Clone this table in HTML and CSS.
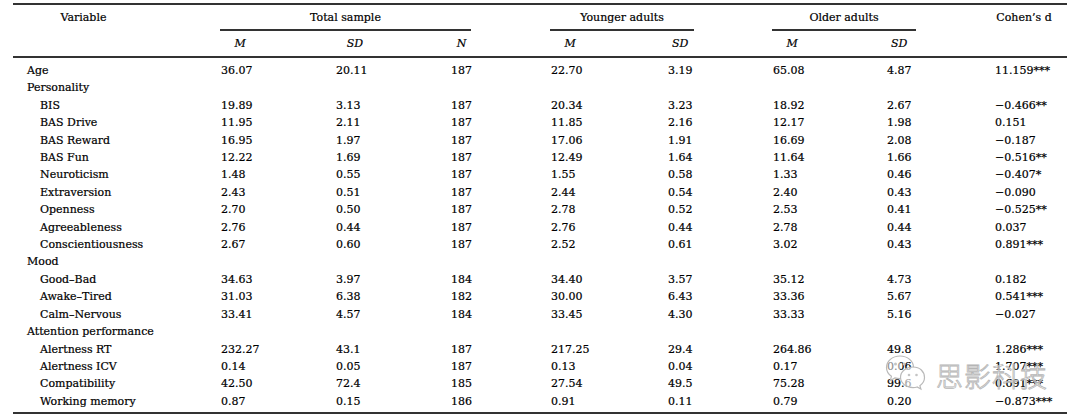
FILE: index.html
```html
<!DOCTYPE html>
<html lang="en">
<head>
<meta charset="utf-8">
<title>Descriptive statistics</title>
<link rel="stylesheet" href="styles.css">
</head>
<body>
<div class="page">
  <div class="tbl">
    <div class="h1 c0"><span class="lab w-var">Variable</span></div>
    <div class="h1 grp span3"><div class="gline w-total">Total sample</div></div>
    <div class="h1 grp span2"><div class="gline w-young">Younger adults</div></div>
    <div class="h1 grp span2"><div class="gline w-old">Older adults</div></div>
    <div class="h1"><span class="lab w-d">Cohen’s d</span></div>

    <div class="h2"></div>
    <div class="h2"><span class="lab it w-m">M</span></div>
    <div class="h2"><span class="lab it w-sd2">SD</span></div>
    <div class="h2"><span class="lab it w-n">N</span></div>
    <div class="h2"><span class="lab it w-m">M</span></div>
    <div class="h2"><span class="lab it w-sd">SD</span></div>
    <div class="h2"><span class="lab it w-m">M</span></div>
    <div class="h2"><span class="lab it w-sd">SD</span></div>
    <div class="h2"></div>

    <div class="rule"></div>

    <div class="c c0 top">Age</div><div class="c">36.07</div><div class="c">20.11</div><div class="c">187</div><div class="c">22.70</div><div class="c">3.19</div><div class="c">65.08</div><div class="c">4.87</div><div class="c">11.159***</div>
    <div class="c full top">Personality</div>
    <div class="c c0 sub">BIS</div><div class="c">19.89</div><div class="c">3.13</div><div class="c">187</div><div class="c">20.34</div><div class="c">3.23</div><div class="c">18.92</div><div class="c">2.67</div><div class="c">−0.466**</div>
    <div class="c c0 sub">BAS Drive</div><div class="c">11.95</div><div class="c">2.11</div><div class="c">187</div><div class="c">11.85</div><div class="c">2.16</div><div class="c">12.17</div><div class="c">1.98</div><div class="c">0.151</div>
    <div class="c c0 sub">BAS Reward</div><div class="c">16.95</div><div class="c">1.97</div><div class="c">187</div><div class="c">17.06</div><div class="c">1.91</div><div class="c">16.69</div><div class="c">2.08</div><div class="c">−0.187</div>
    <div class="c c0 sub">BAS Fun</div><div class="c">12.22</div><div class="c">1.69</div><div class="c">187</div><div class="c">12.49</div><div class="c">1.64</div><div class="c">11.64</div><div class="c">1.66</div><div class="c">−0.516**</div>
    <div class="c c0 sub">Neuroticism</div><div class="c">1.48</div><div class="c">0.55</div><div class="c">187</div><div class="c">1.55</div><div class="c">0.58</div><div class="c">1.33</div><div class="c">0.46</div><div class="c">−0.407*</div>
    <div class="c c0 sub">Extraversion</div><div class="c">2.43</div><div class="c">0.51</div><div class="c">187</div><div class="c">2.44</div><div class="c">0.54</div><div class="c">2.40</div><div class="c">0.43</div><div class="c">−0.090</div>
    <div class="c c0 sub">Openness</div><div class="c">2.70</div><div class="c">0.50</div><div class="c">187</div><div class="c">2.78</div><div class="c">0.52</div><div class="c">2.53</div><div class="c">0.41</div><div class="c">−0.525**</div>
    <div class="c c0 sub">Agreeableness</div><div class="c">2.76</div><div class="c">0.44</div><div class="c">187</div><div class="c">2.76</div><div class="c">0.44</div><div class="c">2.78</div><div class="c">0.44</div><div class="c">0.037</div>
    <div class="c c0 sub">Conscientiousness</div><div class="c">2.67</div><div class="c">0.60</div><div class="c">187</div><div class="c">2.52</div><div class="c">0.61</div><div class="c">3.02</div><div class="c">0.43</div><div class="c">0.891***</div>
    <div class="c full top">Mood</div>
    <div class="c c0 sub">Good–Bad</div><div class="c">34.63</div><div class="c">3.97</div><div class="c">184</div><div class="c">34.40</div><div class="c">3.57</div><div class="c">35.12</div><div class="c">4.73</div><div class="c">0.182</div>
    <div class="c c0 sub">Awake–Tired</div><div class="c">31.03</div><div class="c">6.38</div><div class="c">182</div><div class="c">30.00</div><div class="c">6.43</div><div class="c">33.36</div><div class="c">5.67</div><div class="c">0.541***</div>
    <div class="c c0 sub">Calm–Nervous</div><div class="c">33.41</div><div class="c">4.57</div><div class="c">184</div><div class="c">33.45</div><div class="c">4.30</div><div class="c">33.33</div><div class="c">5.16</div><div class="c">−0.027</div>
    <div class="c full top">Attention performance</div>
    <div class="c c0 sub">Alertness RT</div><div class="c">232.27</div><div class="c">43.1</div><div class="c">187</div><div class="c">217.25</div><div class="c">29.4</div><div class="c">264.86</div><div class="c">49.8</div><div class="c">1.286***</div>
    <div class="c c0 sub">Alertness ICV</div><div class="c">0.14</div><div class="c">0.05</div><div class="c">187</div><div class="c">0.13</div><div class="c">0.04</div><div class="c">0.17</div><div class="c">0.06</div><div class="c">1.707***</div>
    <div class="c c0 sub">Compatibility</div><div class="c">42.50</div><div class="c">72.4</div><div class="c">185</div><div class="c">27.54</div><div class="c">49.5</div><div class="c">75.28</div><div class="c">99.6</div><div class="c">0.691***</div>
    <div class="c c0 sub">Working memory</div><div class="c">0.87</div><div class="c">0.15</div><div class="c">186</div><div class="c">0.91</div><div class="c">0.11</div><div class="c">0.79</div><div class="c">0.20</div><div class="c">−0.873***</div>
  </div>

  <div class="watermark">
    <svg class="wm-logo" width="44" height="40" viewBox="0 0 44 40">
      <path d="M16 3C8.3 3 2.5 8.2 2.5 14.5c0 3.6 1.9 6.7 4.9 8.8L6.3 27.5l4.6-2.6c1.6.5 3.3.8 5.1.8" fill="rgba(255,255,255,0.55)" stroke="#b9b9b9" stroke-width="1.2"/>
      <path d="M16 3c7.7 0 13.5 5.2 13.5 11.5" fill="none" stroke="#b9b9b9" stroke-width="1.2"/>
      <circle cx="11.5" cy="11" r="1.5" fill="#c4c4c4"/>
      <circle cx="20" cy="11" r="1.5" fill="#c4c4c4"/>
      <path d="M29 14c-7 0-12.5 4.6-12.5 10.3S22 34.6 29 34.6c1.4 0 2.8-.2 4.1-.6l3.8 2.1-1-3.4c2.8-1.9 4.6-4.8 4.6-8.1C40.5 18.6 35.9 14 29 14z" fill="rgba(255,255,255,0.65)" stroke="#b9b9b9" stroke-width="1.2"/>
      <circle cx="25" cy="22" r="1.3" fill="#c4c4c4"/>
      <circle cx="32.5" cy="22" r="1.3" fill="#c4c4c4"/>
    </svg>
    <span class="wm-text">思影科技</span>
  </div>
</div>
</body>
</html>
```

FILE: styles.css
```css
html, body {
  margin: 0;
  padding: 0;
  background: #ffffff;
}

.page {
  position: relative;
  width: 1080px;
  height: 419px;
  padding-top: 3px;
  box-sizing: border-box;
  font-family: "DejaVu Serif", serif;
  font-size: 11px;
  color: #000000;
  -webkit-text-stroke: 0.2px #000000;
}

.tbl {
  display: grid;
  grid-template-columns: 208px 115px 115px 100px 117px 105px 114px 108px 72px;
  margin-left: 13px;
  width: 1054px;
  border-top: 2px solid #333333;
  border-bottom: 2px solid #333333;
  padding-bottom: 2px;
}

.h1 {
  height: 26px;
  line-height: 25px;
}

.h2 {
  height: 25px;
  line-height: 25px;
}

.h1.c0 {
  padding-left: 13px;
}

.lab {
  display: inline-block;
  text-align: center;
}

.it {
  font-style: italic;
}

.w-var { width: 115px; }
.w-m { width: 38.5px; }
.w-sd2 { width: 38px; }
.w-n { width: 21px; }
.w-sd { width: 24.5px; }
.w-d { width: 58px; }

.span3 { grid-column: span 3; }
.span2 { grid-column: span 2; }

.gline {
  height: 26px;
  box-sizing: border-box;
  border-bottom: 2px solid #333333;
  text-align: center;
  line-height: 25px;
}

.w-total { width: 251px; margin-left: -1px; }
.w-young { width: 144px; margin-left: -1px; }
.w-old { width: 144px; margin-left: -1px; }

.rule {
  grid-column: 1 / -1;
  height: 2px;
  background: #333333;
  margin-bottom: 4px;
}

.c {
  height: 17.42px;
  line-height: 17.42px;
  white-space: nowrap;
}

.full {
  grid-column: 1 / -1;
}

.top {
  padding-left: 14px;
}

.sub {
  padding-left: 27px;
}

.watermark {
  position: absolute;
  left: 884px;
  top: 350px;
  display: flex;
  align-items: center;
  gap: 8px;
  -webkit-text-stroke: 0;
}

.wm-logo {
  display: block;
}

.wm-text {
  font-family: "Noto Sans CJK SC", sans-serif;
  font-weight: 300;
  font-size: 27px;
  letter-spacing: 1px;
  color: rgba(255, 255, 255, 0.55);
  -webkit-text-stroke: 0.8px #b5b5b5;
  margin-top: 6px;
}
```
